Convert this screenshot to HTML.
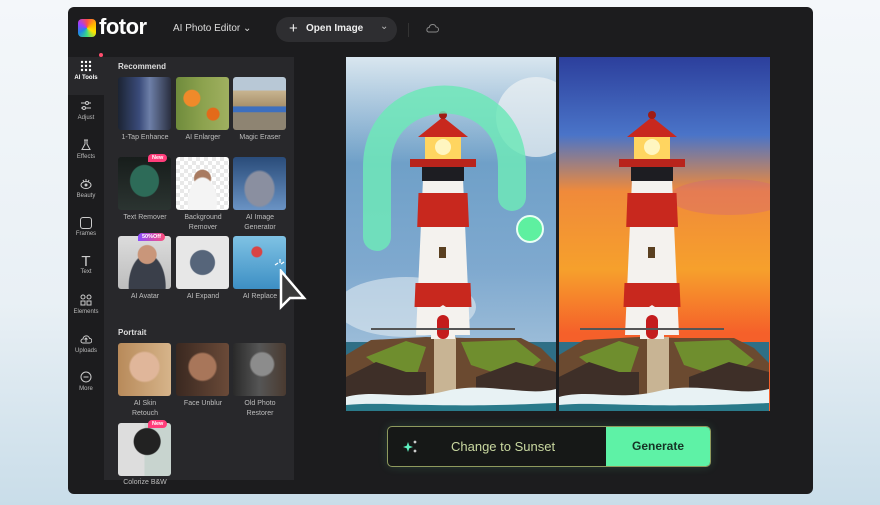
<!DOCTYPE html>
<html><head><meta charset="utf-8"><style>
*{box-sizing:border-box;margin:0;padding:0}
body{width:880px;height:505px;overflow:hidden;background:linear-gradient(180deg,#f4f7fa 0%,#e9f0f5 60%,#c9dde9 100%);font-family:"Liberation Sans",sans-serif;position:relative}
.win{position:absolute;left:68px;top:7px;width:745px;height:487px;background:#1c1c1e;border-radius:6px;overflow:hidden}
.a{position:absolute}
.ri{position:absolute;left:0;width:36px;text-align:center;color:#bbb;font-size:6px}
.ri .g{display:block;margin:0 auto 2px;width:12px;height:12px;border:1.3px solid #ccc;border-radius:3px}
.panel{left:36px;top:50px;width:190px;height:423px;background:#28282b}
.th{position:absolute;width:53px;height:53px;border-radius:3px;overflow:hidden}
.lb{position:absolute;width:64px;text-align:center;color:#bdbdbd;font-size:7px;line-height:10px}
.sec{position:absolute;color:#ddd;font-size:8px;font-weight:bold}
.badge{position:absolute;background:#ff3d7a;color:#fff;font-size:5.5px;font-weight:bold;border-radius:6px 6px 6px 0;padding:1px 4px}
</style></head><body>
<div class="win">
 <div class="a" style="left:10px;top:12px;width:18px;height:18px;border-radius:4px;background:conic-gradient(#ff4d4d,#ffb300,#ffe400,#3ddc84,#1e88e5,#a23bff,#ff4d4d)"></div>
 <div class="a" style="left:31px;top:7px;color:#fff;font-size:22px;font-weight:bold;letter-spacing:-0.5px">fotor</div>
 <div class="a" style="left:105px;top:16px;color:#ddd;font-size:10px">AI Photo Editor ⌄</div>
 <div class="a" style="left:208px;top:10px;width:121px;height:25px;border-radius:13px;background:#2e2e31"></div>
 <div class="a" style="left:221px;top:13px;color:#eee;font-size:15px">+</div>
 <div class="a" style="left:238px;top:16px;color:#eee;font-size:10px;font-weight:bold">Open Image</div>
 <div class="a" style="left:312px;top:14px;color:#bbb;font-size:10px">⌄</div>
 <div class="a" style="left:340px;top:16px;width:1px;height:14px;background:#333"></div>
 <svg class="a" style="left:357px;top:16px" width="14" height="10" viewBox="0 0 14 10"><path d="M3.5 9h7.5a2.5 2.5 0 0 0 0-5 3.5 3.5 0 0 0-6.8 0.5A2.3 2.3 0 0 0 3.5 9z" fill="none" stroke="#888" stroke-width="1"/></svg>

 <div class="a" style="left:0;top:50px;width:36px;height:38px;background:#28282b"></div>
 <div class="a" style="left:31px;top:46px;width:4px;height:4px;border-radius:2px;background:#ff4d6d"></div>
 <div class="ri" style="top:53px;color:#fff;font-weight:bold"><svg width="12" height="12" viewBox="0 0 12 12" style="display:block;margin:0 auto 3px"><g fill="#fff"><circle cx="2" cy="2" r="1.2"/><circle cx="6" cy="2" r="1.2"/><circle cx="10" cy="2" r="1.2"/><circle cx="2" cy="6" r="1.2"/><circle cx="6" cy="6" r="1.2"/><circle cx="10" cy="6" r="1.2"/><circle cx="2" cy="10" r="1.2"/><circle cx="6" cy="10" r="1.2"/><circle cx="10" cy="10" r="1.2"/></g></svg>AI Tools</div>
 <div class="ri" style="top:93px"><svg width="12" height="12" viewBox="0 0 12 12" style="display:block;margin:0 auto 3px"><path d="M1 3h10M1 8h10" stroke="#ccc"/><circle cx="7" cy="3" r="1.5" fill="#1c1c1e" stroke="#ccc"/><circle cx="4" cy="8" r="1.5" fill="#1c1c1e" stroke="#ccc"/></svg>Adjust</div>
 <div class="ri" style="top:132px"><svg width="12" height="12" viewBox="0 0 12 12" style="display:block;margin:0 auto 3px"><path d="M4 1h4M5 1v4L2 10.5h8L7 5V1" fill="none" stroke="#ccc"/></svg>Effects</div>
 <div class="ri" style="top:171px"><svg width="12" height="12" viewBox="0 0 12 12" style="display:block;margin:0 auto 3px"><ellipse cx="6" cy="7" rx="5" ry="3.5" fill="none" stroke="#ccc"/><circle cx="6" cy="7" r="1.5" fill="#ccc"/><path d="M3 2l1 2M6 1v2M9 2l-1 2" stroke="#ccc"/></svg>Beauty</div>
 <div class="ri" style="top:210px"><span class="g"></span>Frames</div>
 <div class="ri" style="top:248px;font-size:6px"><span style="display:block;font-size:15px;color:#ccc;line-height:14px">T</span>Text</div>
 <div class="ri" style="top:287px"><svg width="12" height="12" viewBox="0 0 12 12" style="display:block;margin:0 auto 3px"><g fill="none" stroke="#ccc"><circle cx="3" cy="3" r="2"/><circle cx="9" cy="3" r="2"/><rect x="1" y="7" width="4" height="4"/><rect x="7" y="7" width="4" height="4"/></g></svg>Elements</div>
 <div class="ri" style="top:326px"><svg width="12" height="12" viewBox="0 0 12 12" style="display:block;margin:0 auto 3px"><path d="M3 10h6.5a2.3 2.3 0 0 0 0-4.6A3.3 3.3 0 0 0 3 6 2 2 0 0 0 3 10zM6 9V5M4.5 6.5L6 5l1.5 1.5" fill="none" stroke="#ccc"/></svg>Uploads</div>
 <div class="ri" style="top:364px"><svg width="12" height="12" viewBox="0 0 12 12" style="display:block;margin:0 auto 3px"><circle cx="6" cy="6" r="5" fill="none" stroke="#ccc"/><path d="M3.5 6h5" stroke="#ccc"/></svg>More</div>

 <div class="a panel">
  <div class="sec" style="left:14px;top:5px">Recommend</div>
  <div class="th" style="left:14px;top:20px;background:linear-gradient(90deg,#1c2433,#3a4b7a 40%,#6d7fa8 60%,#2a2f40)"></div>
  <div class="th" style="left:72px;top:20px;background:radial-gradient(circle at 30% 40%,#f08a2a 0 8px,transparent 9px),radial-gradient(circle at 70% 70%,#e36a1a 0 6px,transparent 7px),linear-gradient(90deg,#6f8b3c,#8ca24e 50%,#a0b060)"></div>
  <div class="th" style="left:129px;top:20px;background:linear-gradient(180deg,#b8c8d6 0,#b8c8d6 25%,#c8b490 26%,#a8916c 55%,#3d6fbf 56%,#3d6fbf 66%,#8e8472 67%)"></div>
  <div class="lb" style="left:9px;top:76px">1-Tap Enhance</div>
  <div class="lb" style="left:67px;top:76px">AI Enlarger</div>
  <div class="lb" style="left:124px;top:76px">Magic Eraser</div>

  <div class="th" style="left:14px;top:100px;background:radial-gradient(ellipse at 50% 45%,#2d6b58 0 14px,transparent 15px),linear-gradient(#171d1b,#2b3431)"></div>
  <div class="badge" style="left:44px;top:97px">New</div>
  <div class="th" style="left:72px;top:100px;background:radial-gradient(ellipse at 50% 85%,#f4f4f4 0 14px,transparent 15px),radial-gradient(circle at 50% 40%,#a87a60 0 8px,transparent 9px),repeating-conic-gradient(#e8e8e8 0 25%,#fff 0 50%) 0 0/8px 8px"></div>
  <div class="th" style="left:129px;top:100px;background:radial-gradient(ellipse at 50% 60%,#8a8fa0 0 14px,transparent 16px),linear-gradient(#2a4c7a,#6a93c4)"></div>
  <div class="lb" style="left:9px;top:156px">Text Remover</div>
  <div class="lb" style="left:67px;top:156px">Background<br>Remover</div>
  <div class="lb" style="left:124px;top:156px">AI Image<br>Generator</div>

  <div class="th" style="left:14px;top:179px;background:radial-gradient(circle at 55% 35%,#c9967a 0 9px,transparent 10px),radial-gradient(ellipse at 55% 95%,#3a3f4a 0 18px,transparent 19px),linear-gradient(#dcdcdc,#bdbdbd)"></div>
  <div class="badge" style="left:34px;top:176px;background:linear-gradient(90deg,#8a4dff,#ff4d7a)">50%Off</div>
  <div class="th" style="left:72px;top:179px;background:radial-gradient(#56657a 0 12px,#e7e7e7 13px)"></div>
  <div class="th" style="left:129px;top:179px;background:radial-gradient(circle at 45% 30%,#d94444 0 5px,transparent 6px),linear-gradient(#7fc2e4,#3d8fc4)"></div>
  <div class="lb" style="left:9px;top:235px">AI Avatar</div>
  <div class="lb" style="left:67px;top:235px">AI Expand</div>
  <div class="lb" style="left:124px;top:235px">AI Replace</div>

  <div class="sec" style="left:14px;top:271px">Portrait</div>
  <div class="th" style="left:14px;top:286px;background:radial-gradient(circle at 50% 45%,#e0b69a 0 14px,transparent 16px),linear-gradient(90deg,#b88a5a,#d6b48a)"></div>
  <div class="th" style="left:72px;top:286px;background:radial-gradient(circle at 50% 45%,#a8765a 0 13px,transparent 15px),linear-gradient(90deg,#3a2820,#6a4a38)"></div>
  <div class="th" style="left:129px;top:286px;background:radial-gradient(circle at 55% 40%,#8c8c8c 0 11px,transparent 13px),linear-gradient(90deg,#2a2a2a,#555 50%,#4a3a30)"></div>
  <div class="lb" style="left:9px;top:342px">AI Skin<br>Retouch</div>
  <div class="lb" style="left:67px;top:342px">Face Unblur</div>
  <div class="lb" style="left:124px;top:342px">Old Photo<br>Restorer</div>
  <div class="th" style="left:14px;top:366px;background:radial-gradient(circle at 55% 35%,#222 0 13px,transparent 14px),linear-gradient(90deg,#ddd 50%,#c8d4cf 50%)"></div>
  <div class="badge" style="left:44px;top:363px">New</div>
  <div class="lb" style="left:9px;top:421px">Colorize B&amp;W</div>
 </div>
 <svg class="a" style="left:210px;top:262px" width="36" height="42" viewBox="0 0 36 42"><path d="M3 2v36l9-9 14 0z" fill="#3a3a3a" stroke="#fff" stroke-width="2.5"/></svg>
 <svg class="a" style="left:205px;top:250px" width="14" height="14"><path d="M2 8l3-2M7 2v4M11 5l-3 2" stroke="#fff" stroke-width="1.2"/></svg>

 <svg class="a" style="left:278px;top:50px" width="424" height="354" viewBox="0 0 424 354">
  <defs>
   <linearGradient id="sky1" x1="0" y1="0" x2="0" y2="1"><stop offset="0" stop-color="#d9e6ef"/><stop offset=".3" stop-color="#6fa0c8"/><stop offset=".6" stop-color="#7fa9cf"/><stop offset="1" stop-color="#b4cde0"/></linearGradient>
   <linearGradient id="sky2" x1="0" y1="0" x2="0" y2="1"><stop offset="0" stop-color="#2c3f9c"/><stop offset=".22" stop-color="#4a74c8"/><stop offset=".38" stop-color="#f08a3a"/><stop offset=".6" stop-color="#f6a02c"/><stop offset=".78" stop-color="#f5602a"/></linearGradient>
   <g id="lh">
    <path d="M-27 278L-20 122h40l7 156z" fill="#f4f2ee"/>
    <path d="M-25.8 170L-24.5 136h49L26 170z" fill="#c8281e"/>
    <path d="M-28.5 250L-27.5 226h55l1 24z" fill="#c8281e"/>
    <rect x="-4" y="190" width="7" height="11" fill="#5a4020"/>
    <path d="M-12 256l12-8 12 8v26h-24z" fill="#f4f2ee"/>
    <rect x="-6" y="258" width="12" height="24" rx="6" fill="#c41c1c"/>
    <rect x="-21" y="110" width="42" height="14" fill="#1d1d22"/>
    <rect x="-33" y="102" width="66" height="8" fill="#b8241c"/>
    <rect x="-18" y="80" width="36" height="22" fill="#ffd560"/>
    <circle cx="0" cy="90" r="8" fill="#fff6c0"/>
    <path d="M-25 80L0 60 25 80z" fill="#c8281e"/>
    <circle cx="0" cy="58" r="4" fill="#a01c14"/>
    <path d="M-72 272h144" stroke="#555" stroke-width="2"/>
   </g>
   <g id="base">
    <rect x="0" y="285" width="210" height="69" fill="#2f6f86"/>
    <path d="M0 298l25-15 55-3 40 1 55 0 20 10 15 15v48H0z" fill="#6b4a30"/>
    <path d="M20 300l40-16 20 6 -10 30 -30 -5zM115 285l55 -2 25 20 -25 20 -45 -15z" fill="#6f8e2e"/>
    <path d="M0 320l30-15 30 10 20 0 0 30H0zM130 320l40-15 40 10 0 30 -80 0z" fill="#3e2f28"/>
    <path d="M88 280h22v60H88z" fill="#c8b494"/>
    <path d="M0 340c30-8 60 4 100-6s80 6 110-2v22H0z" fill="#e8f2f4"/>
    <path d="M0 348c40-4 80 4 210-2v8H0z" fill="#2a7a8a"/>
   </g>
  </defs>
  <rect x="0" y="0" width="210" height="354" fill="url(#sky1)"/>
  <ellipse cx="60" cy="250" rx="70" ry="30" fill="#e0eaf0" opacity=".6"/>
  <ellipse cx="190" cy="60" rx="40" ry="40" fill="#eef2f4" opacity=".7"/>
  <use href="#base"/>
  <use href="#lh" x="97"/>
  <path d="M31 180V110c0-90 135-90 135 0v30" fill="none" stroke="#6ee8b8" stroke-width="28" stroke-linecap="round" opacity=".85"/>
  <circle cx="184" cy="172" r="13" fill="#5ef0a0" stroke="#e8fff4" stroke-width="2"/>
  <rect x="210" y="0" width="3" height="354" fill="#1c1c1e"/>
  <g transform="translate(213 0)">
   <rect x="0" y="0" width="211" height="354" fill="url(#sky2)"/>
   <ellipse cx="170" cy="140" rx="60" ry="18" fill="#d06080" opacity=".35"/>
   <use href="#base"/>
   <use href="#lh" x="93"/>
  </g>
 </svg>

 <div class="a" style="left:319px;top:419px;width:324px;height:41px;border:1.5px solid #8f9a5e;border-radius:5px;background:#161817;box-shadow:0 0 10px rgba(94,240,168,.15)"></div>
 <div class="a" style="left:538px;top:420px;width:104px;height:39px;background:#5ef2a6;border-radius:0 4px 4px 0"></div>
 <div class="a" style="left:564px;top:432px;color:#163326;font-size:12px;font-weight:bold">Generate</div>
 <div class="a" style="left:383px;top:432px;color:#c9d8a0;font-size:13px">Change to Sunset</div>
 <svg class="a" style="left:334px;top:432px" width="18" height="16" viewBox="0 0 18 16"><path d="M6 3l1.3 3.7L11 8 7.3 9.3 6 13 4.7 9.3 1 8l3.7-1.3z" fill="#5ef0c0"/><path d="M13 1l.6 1.4L15 3l-1.4.6L13 5l-.6-1.4L11 3l1.4-.6zM13 10l.6 1.4 1.4.6-1.4.6L13 14l-.6-1.4-1.4-.6 1.4-.6z" fill="#fff"/></svg>
</div>
</body></html>
